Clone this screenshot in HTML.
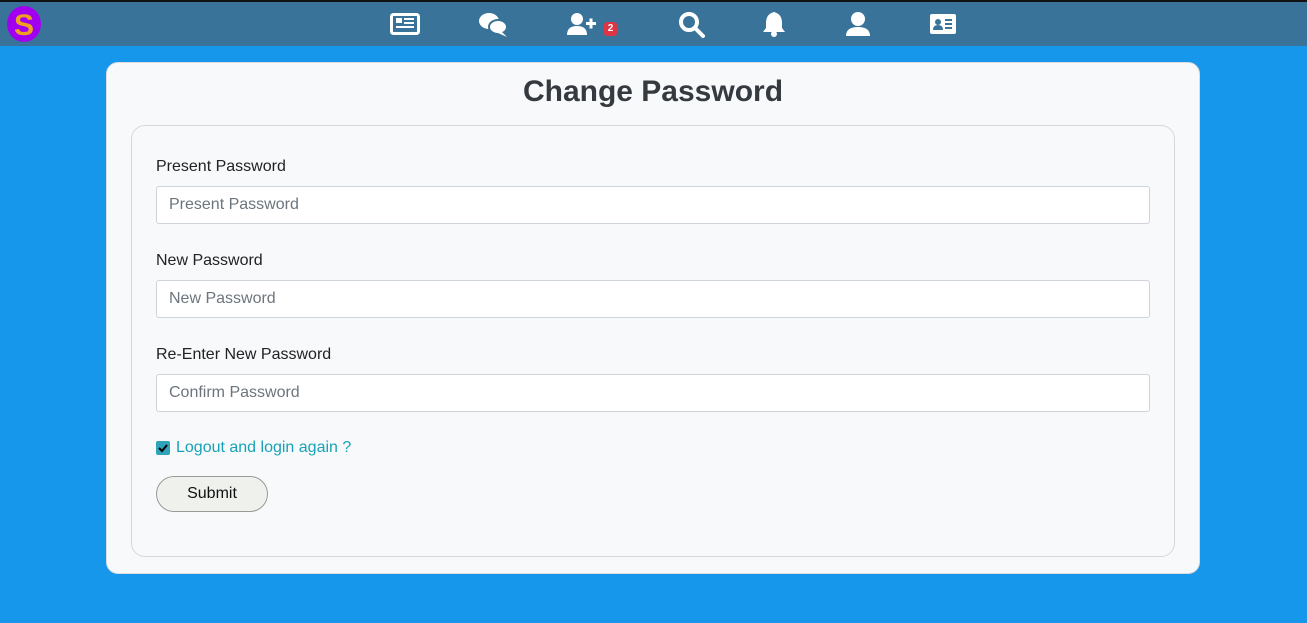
<!DOCTYPE html>
<html><head><style>
*{box-sizing:border-box;margin:0;padding:0}
body{width:1307px;height:623px;background:#1797ec;font-family:"Liberation Sans",sans-serif;position:relative;overflow:hidden}
.nav{position:absolute;left:0;top:0;width:1307px;height:46px;background:#3a7399;border-top:2px solid #111}
.ic{position:absolute;top:8px}
.card{position:absolute;left:106px;top:62px;width:1094px;height:512px;background:#f8f9fa;border-radius:12px;border:1px solid #ddd}
h1{position:absolute;top:12px;width:100%;text-align:center;font-size:30px;font-weight:bold;color:#343a40}
.inner{position:absolute;left:24px;top:62px;width:1044px;height:432px;border:1px solid #d5d8db;border-radius:14px}
.lbl{position:absolute;left:24px;font-size:16px;color:#222}
.inp{position:absolute;left:24px;width:994px;height:38px;background:#fff;border:1px solid #ced4da;border-radius:3px;font-size:16px;color:#6c757d;padding:9px 12px}
</style></head><body>
<div class="nav">
<svg class="ic" style="left:6px;top:4px" width="36" height="36"><ellipse cx="18" cy="18" rx="17" ry="18" fill="#a100f0"/><text x="18" y="29" text-anchor="middle" font-size="30" font-weight="bold" fill="#f0a020" font-family="Liberation Sans">S</text></svg>
<svg class="ic" style="left:390px;top:11px" width="30" height="22"><rect x="1.5" y="1.5" width="27" height="19" rx="2" fill="none" stroke="#fff" stroke-width="3"/><rect x="6" y="5" width="6" height="5" fill="#fff"/><rect x="14" y="5" width="10" height="2" fill="#fff"/><rect x="14" y="9" width="10" height="2" fill="#fff"/><rect x="6" y="13" width="18" height="2" fill="#fff"/></svg>
<svg class="ic" style="left:478px;top:10px" width="30" height="26"><ellipse cx="11" cy="9" rx="10" ry="8" fill="#fff"/><ellipse cx="20" cy="15" rx="9" ry="7" fill="#fff" stroke="#3a7399" stroke-width="2"/><path d="M24 20 L29 25 L20 21Z" fill="#fff"/></svg>
<svg class="ic" style="left:567px;top:10px" width="34" height="24"><circle cx="10" cy="7" r="6" fill="#fff"/><path d="M0 23 Q0 14 10 14 Q20 14 20 23Z" fill="#fff"/><rect x="19" y="10" width="10" height="3" fill="#fff"/><rect x="22.5" y="6.5" width="3" height="10" fill="#fff"/></svg>
<div style="position:absolute;left:604px;top:20px;width:13px;height:14px;background:#dc3545;border-radius:3px;color:#fff;font-size:10px;font-weight:bold;text-align:center;line-height:14px">2</div>
<svg class="ic" style="left:678px;top:9px" width="28" height="28"><circle cx="11" cy="11" r="8" fill="none" stroke="#fff" stroke-width="4"/><path d="M17 17 L25 25" stroke="#fff" stroke-width="4" stroke-linecap="round"/></svg>
<svg class="ic" style="left:762px;top:8px" width="24" height="28"><path d="M12 2 Q4 4 4 13 L4 18 L1 22 L23 22 L20 18 L20 13 Q20 4 12 2Z" fill="#fff"/><circle cx="12" cy="24" r="3" fill="#fff"/></svg>
<svg class="ic" style="left:845px;top:9px" width="26" height="26"><circle cx="13" cy="8" r="7" fill="#fff"/><path d="M1 25 Q1 16 13 16 Q25 16 25 25Z" fill="#fff"/></svg>
<svg class="ic" style="left:930px;top:12px" width="26" height="20"><rect width="26" height="20" rx="2" fill="#fff"/><circle cx="8" cy="8" r="3" fill="#3a7399"/><path d="M3 16 Q3 11 8 11 Q13 11 13 16Z" fill="#3a7399"/><rect x="15" y="5" width="7" height="2" fill="#3a7399"/><rect x="15" y="9" width="7" height="2" fill="#3a7399"/><rect x="15" y="13" width="7" height="2" fill="#3a7399"/></svg>
</div>
<div class="card">
<h1>Change Password</h1>
<div class="inner">
<div class="lbl" style="top:32px">Present Password</div>
<div class="inp" style="top:60px">Present Password</div>
<div class="lbl" style="top:126px">New Password</div>
<div class="inp" style="top:154px">New Password</div>
<div class="lbl" style="top:220px">Re-Enter New Password</div>
<div class="inp" style="top:248px">Confirm Password</div>
<div style="position:absolute;left:24px;top:315px;width:14px;height:14px;background:#2fa3b8;border-radius:2px"><svg width="14" height="14"><path d="M3 7 L6 10 L11 4" stroke="#000" stroke-width="2" fill="none"/></svg></div>
<div style="position:absolute;left:44px;top:313px;font-size:16px;color:#17a2b8">Logout and login again ?</div>
<div style="position:absolute;left:24px;top:350px;width:112px;height:36px;background:#eff2ec;border:1px solid #999;border-radius:18px;text-align:center;line-height:34px;font-size:16px;color:#111">Submit</div>
</div>
</div>
</body></html>
